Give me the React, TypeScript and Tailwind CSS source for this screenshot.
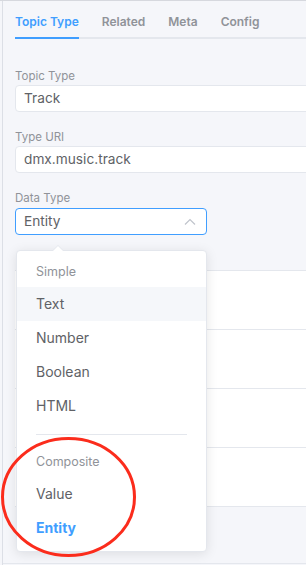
const font = { fontFamily: "Inter, 'Noto Sans', sans-serif" };

const Field = ({ label, value }: { label: string; value: string }) => (
  <div className="mb-[17px]">
    <div className="text-[11.5px] leading-[16px] text-[#909399] mb-[1px]">{label}</div>
    <div className="h-[27px] w-[340px] bg-white border border-[#e4e7ed] rounded-[4px] flex items-center pl-[8px] text-[13.7px] text-[#606266]">
      {value}
    </div>
  </div>
);

const groups = [
  { title: "Simple", items: ["Text", "Number", "Boolean", "HTML"] },
  { title: "Composite", items: ["Value", "Entity"] },
];

const Dropdown = () => (
  <div className="absolute left-[16px] top-[249px] w-[191px] bg-white border border-[#e4e7ed] rounded-[4px] shadow-[0_2px_12px_0_rgba(0,0,0,0.1)] py-[6px]">
    <div className="absolute -top-[6px] left-[35px] w-0 h-0 border-x-[6px] border-x-transparent border-b-[6px] border-b-[#e4e7ed]" />
    <div className="absolute -top-[5px] left-[35px] w-0 h-0 border-x-[6px] border-x-transparent border-b-[6px] border-b-white" />
    {groups.map((g, gi) => (
      <div key={g.title} className={gi < groups.length - 1 ? "pb-[24px] relative" : ""}>
        <div className="h-[30px] leading-[30px] pl-[19px] text-[12.5px] text-[#909399]">{g.title}</div>
        {g.items.map((item) => (
          <div
            key={item}
            className={`h-[34px] leading-[34px] pl-[19px] text-[14px] ${
              item === "Entity"
                ? "text-[#409eff] font-bold"
                : item === "Text"
                  ? "text-[#606266] bg-[#f5f7fa]"
                  : "text-[#606266]"
            }`}
          >
            {item}
          </div>
        ))}
        {gi < groups.length - 1 && (
          <div className="absolute left-[19px] right-[19px] bottom-[12px] h-px bg-[#e4e7ed]" />
        )}
      </div>
    ))}
  </div>
);

export default function App() {
  const tabs = ["Topic Type", "Related", "Meta", "Config"];
  return (
    <div style={font} className="relative w-[306px] h-[565px] overflow-hidden bg-[#f5f6fa] border-t border-[#d6d8de]">
      <div className="ml-[2px] h-full border-l border-[#dcdfe6] flex flex-col">
        <div className="pl-[12px]">
          <div className="flex gap-[23px] border-b-2 border-[#e4e7ed] w-[400px]">
            {tabs.map((t, i) => (
              <div
                key={t}
                className={`-mb-[2px] pt-[13px] pb-[7px] leading-[16px] text-[12px] font-semibold border-b-2 ${
                  i === 0 ? "text-[#409eff] border-[#409eff]" : "text-[#909399] border-transparent"
                }`}
              >
                {t}
              </div>
            ))}
          </div>

          <div className="pt-[29px]">
            <Field label="Topic Type" value="Track" />
            <Field label="Type URI" value="dmx.music.track" />
            <div>
              <div className="text-[11.5px] leading-[16px] text-[#909399] mb-[2px]">Data Type</div>
              <div className="h-[27px] w-[192px] bg-white border border-[#409eff] rounded-[4px] flex items-center justify-between pl-[8px] pr-[10px] text-[13.7px] text-[#606266]">
                <span>Entity</span>
                <svg width="12" height="8" viewBox="0 0 12 8" fill="none">
                  <path d="M1 6.5 L6 1.5 L11 6.5" stroke="#c0c4cc" strokeWidth="1.2" />
                </svg>
              </div>
            </div>
          </div>

          <div className="mt-[35px] w-[340px] bg-white border-t border-[#e4e7ed]">
            {[0, 1, 2, 3].map((r) => (
              <div key={r} className="h-[59px] border-b border-[#e4e7ed]" />
            ))}
          </div>
        </div>
        <div className="flex-1" />
        <div className="h-px bg-[#e4e7ed] mb-[1px]" />
      </div>

      <Dropdown />

      <svg className="absolute left-0 top-0 pointer-events-none" width="306" height="565">
        <ellipse cx="68.5" cy="496" rx="66" ry="58.5" fill="none" stroke="#fb2c1c" strokeWidth="3" />
      </svg>
    </div>
  );
}
